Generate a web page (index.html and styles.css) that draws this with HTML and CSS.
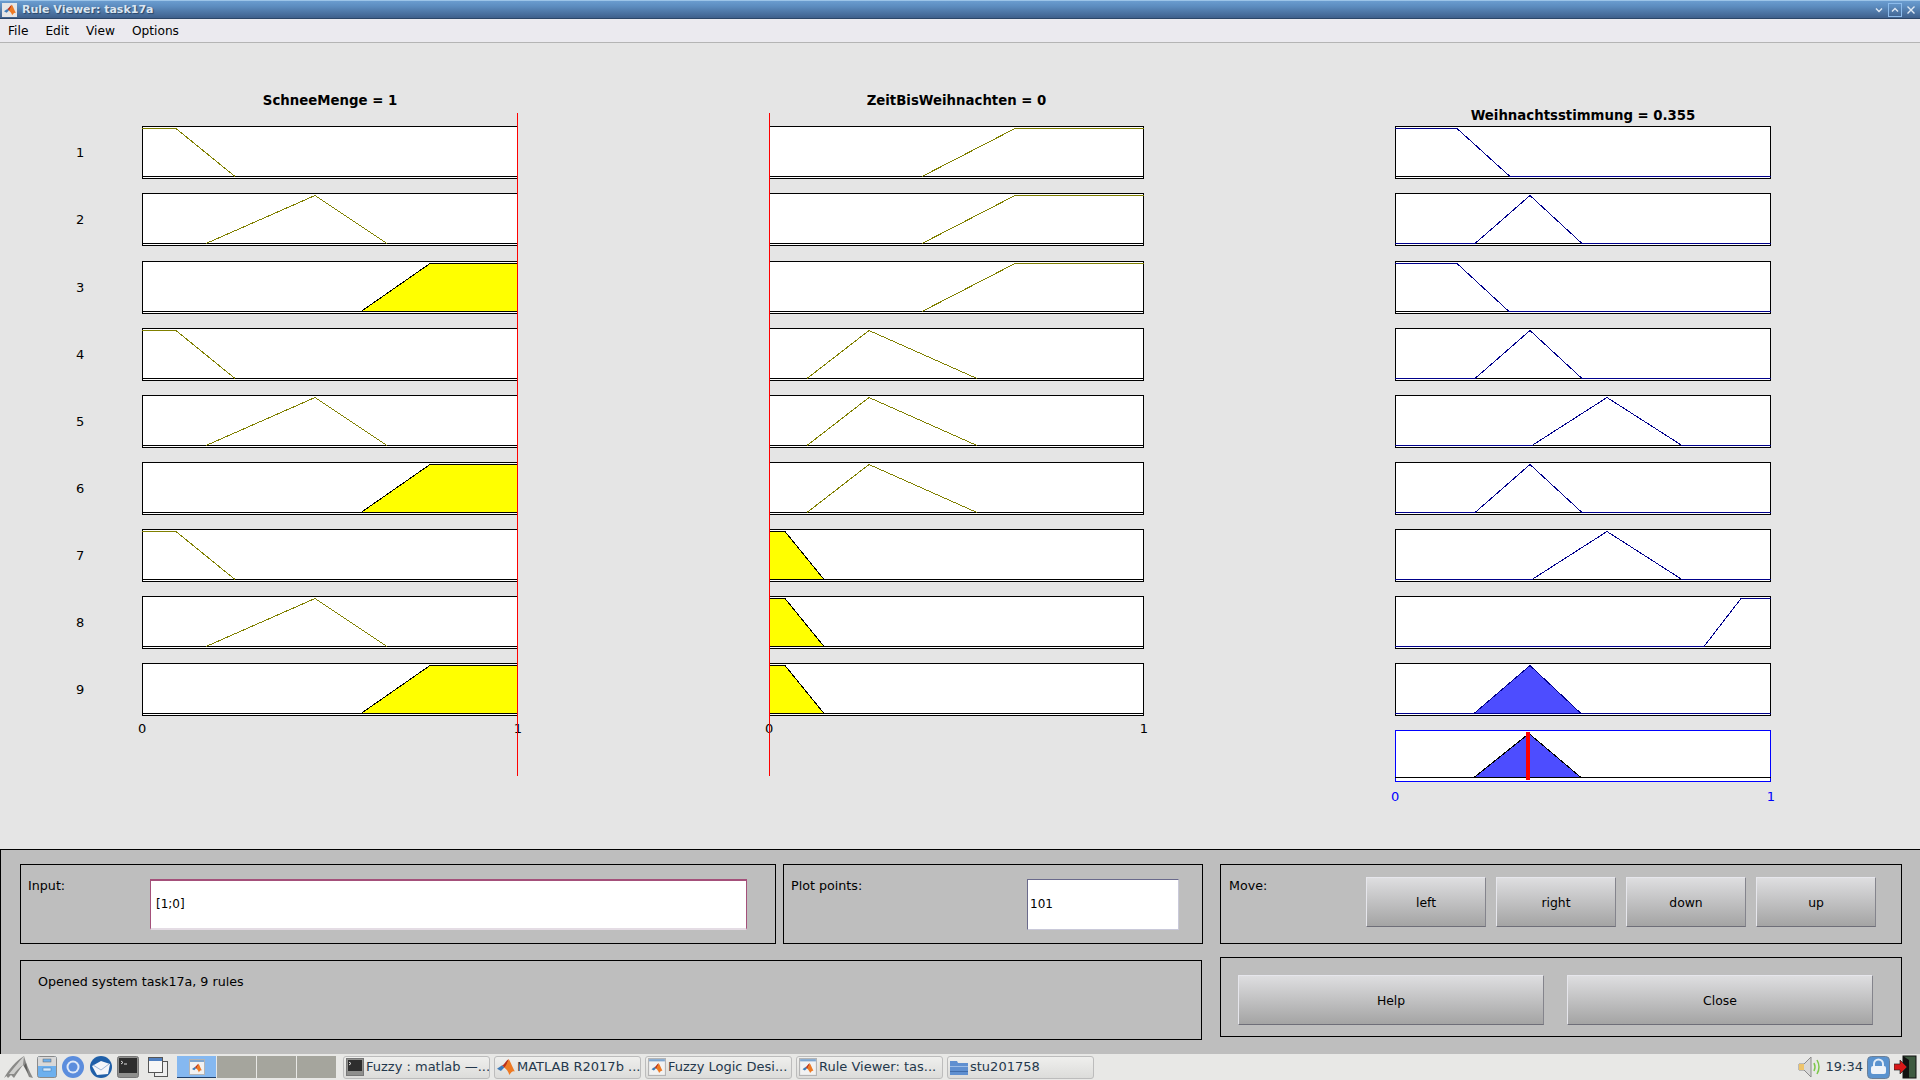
FILE: index.html
```html
<!DOCTYPE html>
<html>

<head>
    <title>Rule Viewer: task17a</title>
    <link rel="stylesheet" href="styles.css">
</head>

<body>
    <svg class="defs">
        <symbol id="matlab" viewBox="0 0 16 16">
            <path d="M0 9.5 L4.5 6.5 L6.5 8.5 L3.5 11.5Z" fill="#3d7ab8" />
            <path d="M4.5 6.5 C6.5 6 8 2 10.5 1 L8 9 L6.5 8.5Z" fill="#b8301c" />
            <path d="M10.5 1 C12 3 14 9 16 12 C14 11 12.5 12.5 11 15 C10 12 8.5 10 6.5 8.5 C8 7 9.5 3 10.5 1Z" fill="#ee7a24" />
        </symbol>
        <symbol id="matlabwin" viewBox="0 0 16 16">
            <rect x="0.5" y="0.5" width="15" height="15" fill="#f2f2f2" stroke="#b4b4b4" />
            <rect x="1" y="1" width="14" height="2" fill="#7fa6cf" />
            <use href="#matlab" x="3" y="4" width="10" height="10" />
        </symbol>
        <!-- box and baseline of one axes, stretches with the svg it is used in -->
        <symbol id="frame">
            <rect class="box" x="0.5" y="0.5" />
            <line x1="0" y1="50.5" x2="100%" y2="50.5" stroke="#000" />
        </symbol>
    </svg>

    <div class="titlebar">
        <div class="titleicon"><svg width="12" height="12"><use href="#matlab" /></svg></div>
        <span class="titletext">Rule Viewer: task17a</span>
        <div class="winbtns">
            <svg width="12" height="12" viewBox="0 0 12 12"><path d="M3 4.5 L6 7.5 L9 4.5" class="winglyph" /></svg>
            <svg class="winactive" width="12" height="12" viewBox="0 0 12 12"><path d="M3 7.5 L6 4.5 L9 7.5" class="winglyph" /></svg>
            <svg width="12" height="12" viewBox="0 0 12 12"><path d="M2.5 2.5 L9.5 9.5 M9.5 2.5 L2.5 9.5" class="winglyph" /></svg>
        </div>
    </div>

    <div class="menubar">
        <span>File</span>
        <span>Edit</span>
        <span>View</span>
        <span>Options</span>
    </div>

    <div class="plots">
        <div class="rulenums">
            <div>1</div><div>2</div><div>3</div><div>4</div><div>5</div><div>6</div><div>7</div><div>8</div><div>9</div>
        </div>

        <div class="col col1">
            <div class="plottitle">SchneeMenge = 1</div>
            <svg class="axes"><use href="#frame" /><polyline class="olive" points="0,2.5 34,2.5 93,50.5" /></svg>
            <svg class="axes"><use href="#frame" /><polyline class="olive" points="64,50.5 173,2.5 245,50.5" /></svg>
            <svg class="axes"><use href="#frame" /><polygon class="yellow" points="219,50.5 288,2.5 376,2.5 376,50.5" /></svg>
            <svg class="axes"><use href="#frame" /><polyline class="olive" points="0,2.5 34,2.5 93,50.5" /></svg>
            <svg class="axes"><use href="#frame" /><polyline class="olive" points="64,50.5 173,2.5 245,50.5" /></svg>
            <svg class="axes"><use href="#frame" /><polygon class="yellow" points="219,50.5 288,2.5 376,2.5 376,50.5" /></svg>
            <svg class="axes"><use href="#frame" /><polyline class="olive" points="0,2.5 34,2.5 93,50.5" /></svg>
            <svg class="axes"><use href="#frame" /><polyline class="olive" points="64,50.5 173,2.5 245,50.5" /></svg>
            <svg class="axes"><use href="#frame" /><polygon class="yellow" points="219,50.5 288,2.5 376,2.5 376,50.5" /></svg>
            <div class="ticks"><span>0</span><span>1</span></div>
            <div class="cursor cursor-right"></div>
        </div>

        <div class="col col2">
            <div class="plottitle">ZeitBisWeihnachten = 0</div>
            <svg class="axes"><use href="#frame" /><polyline class="olive" points="153,50.5 246,2.5 375,2.5" /></svg>
            <svg class="axes"><use href="#frame" /><polyline class="olive" points="153,50.5 246,2.5 375,2.5" /></svg>
            <svg class="axes"><use href="#frame" /><polyline class="olive" points="153,50.5 246,2.5 375,2.5" /></svg>
            <svg class="axes"><use href="#frame" /><polyline class="olive" points="38,50.5 100,2.5 208,50.5" /></svg>
            <svg class="axes"><use href="#frame" /><polyline class="olive" points="38,50.5 100,2.5 208,50.5" /></svg>
            <svg class="axes"><use href="#frame" /><polyline class="olive" points="38,50.5 100,2.5 208,50.5" /></svg>
            <svg class="axes"><use href="#frame" /><polygon class="yellow" points="0,2.5 16,2.5 55,50.5 0,50.5" /></svg>
            <svg class="axes"><use href="#frame" /><polygon class="yellow" points="0,2.5 16,2.5 55,50.5 0,50.5" /></svg>
            <svg class="axes"><use href="#frame" /><polygon class="yellow" points="0,2.5 16,2.5 55,50.5 0,50.5" /></svg>
            <div class="ticks"><span>0</span><span>1</span></div>
            <div class="cursor cursor-left"></div>
        </div>

        <div class="col col3">
            <div class="plottitle outtitle">Weihnachtsstimmung = 0.355</div>
            <svg class="axes"><use href="#frame" /><polyline class="navy" points="0,2.5 62,2.5 115,50.5 376,50.5" /></svg>
            <svg class="axes"><use href="#frame" /><polyline class="navy" points="0,50.5 80,50.5 135,2.5 187,50.5 376,50.5" /></svg>
            <svg class="axes"><use href="#frame" /><polyline class="navy" points="0,2.5 62,2.5 114,50.5 376,50.5" /></svg>
            <svg class="axes"><use href="#frame" /><polyline class="navy" points="0,50.5 80,50.5 135,2.5 187,50.5 376,50.5" /></svg>
            <svg class="axes"><use href="#frame" /><polyline class="navy" points="0,50.5 137,50.5 212,2.5 287,50.5 376,50.5" /></svg>
            <svg class="axes"><use href="#frame" /><polyline class="navy" points="0,50.5 80,50.5 135,2.5 187,50.5 376,50.5" /></svg>
            <svg class="axes"><use href="#frame" /><polyline class="navy" points="0,50.5 137,50.5 212,2.5 287,50.5 376,50.5" /></svg>
            <svg class="axes"><use href="#frame" /><polyline class="navy" points="0,50.5 309,50.5 346,2.5 376,2.5" /></svg>
            <svg class="axes"><use href="#frame" /><polygon class="bluefill" points="0,50.5 79,50.5 135,2.5 186,50.5 376,50.5" /></svg>
            <svg class="axes">
                <rect class="aggbox" x="0.5" y="0.5" />
                <polygon class="aggregate" points="0,47.5 79,47.5 134,3.5 186,47.5 376,47.5" />
                <rect x="131" y="2" width="4" height="48" fill="#f00" />
            </svg>
            <div class="ticks blueticks"><span>0</span><span>1</span></div>
        </div>
    </div>

    <div class="controls">
        <div class="ctlleft">
            <div class="ctlrow">
                <div class="panel inputpanel">
                    <div class="label inputlabel">Input:</div>
                    <div class="edit inputedit">[1;0]</div>
                </div>
                <div class="panel plotpanel">
                    <div class="label plotlabel">Plot points:</div>
                    <div class="edit plotedit">101</div>
                </div>
            </div>
            <div class="panel statuspanel">Opened system task17a, 9 rules</div>
        </div>
        <div class="ctlright">
            <div class="panel movepanel">
                <div class="label movelabel">Move:</div>
                <button class="btn movebtn">left</button>
                <button class="btn movebtn">right</button>
                <button class="btn movebtn">down</button>
                <button class="btn movebtn">up</button>
            </div>
            <div class="panel helppanel">
                <button class="btn bigbtn">Help</button>
                <button class="btn bigbtn">Close</button>
            </div>
        </div>
    </div>

    <div class="taskbar">
        <div class="launchers">
            <svg width="30" height="24" viewBox="0 0 30 24">
                <path d="M1 23 C6 14 13 6 21 1 C23 8 26 16 30 23 L26 22 C24 17 22 13 20 10 C17 14 14 18 11 23 L8 20 L5 23 L3.5 21Z" fill="#8a8a88" />
                <path d="M6 19 C10 14 15 8 21 1 L20 10 C16 13 13 16 11 19Z" fill="#cfcfcd" />
                <path d="M23 8 L25 18 L27 22 L21 11Z" fill="#5e5e5c" />
            </svg>
            <svg width="20" height="24" viewBox="0 0 20 24">
                <rect x="0.5" y="1.5" width="19" height="21" rx="2" fill="#6db0ee" stroke="#8a8a8a" />
                <rect x="1" y="2" width="18" height="9" fill="#d9d9d9" />
                <rect x="6" y="4" width="8" height="3" fill="#6db0ee" stroke="#666" stroke-width="0.5" />
                <rect x="6" y="13" width="8" height="3" fill="#d5e9fb" stroke="#3d76b0" stroke-width="0.5" />
            </svg>
            <svg width="24" height="24" viewBox="0 0 24 24">
                <circle cx="12" cy="12" r="11" fill="#5b8ddd" />
                <circle cx="12" cy="12" r="6.5" fill="#dfe9f8" />
                <circle cx="12" cy="12" r="4.5" fill="#5b8ddd" />
            </svg>
            <svg width="24" height="24" viewBox="0 0 24 24">
                <circle cx="12" cy="12" r="11" fill="#1f5fa8" />
                <path d="M3 11 L12 6 L21 9 L19 19 L8 20Z" fill="#f4f6fa" />
                <path d="M4 10 L12 15 L20 9" fill="none" stroke="#9db5d6" />
            </svg>
            <svg width="22" height="22" viewBox="0 0 22 22">
                <rect x="0.5" y="0.5" width="21" height="21" rx="2" fill="#8f8f8d" stroke="#777" />
                <rect x="2" y="2" width="18" height="15" fill="#2e2e2e" />
                <path d="M4 5 L6 6.5 L4 8 M7 8 H10" fill="none" stroke="#ddd" />
            </svg>
            <svg class="switcher" width="20" height="20" viewBox="0 0 20 20">
                <rect x="6.5" y="4.5" width="13" height="15" fill="#eee" stroke="#555" />
                <rect x="0.5" y="0.5" width="14" height="15" fill="#f6f6f6" stroke="#555" />
                <rect x="1" y="1" width="13" height="3" fill="#4f7fc0" />
            </svg>
        </div>
        <div class="pager">
            <div class="desk deskactive"><svg width="16" height="16"><use href="#matlabwin" /></svg></div>
            <div class="desk"></div>
            <div class="desk"></div>
            <div class="desk"></div>
        </div>
        <div class="tasks">
            <div class="task">
                <svg width="18" height="18" viewBox="0 0 18 18"><rect x="0.5" y="0.5" width="17" height="17" fill="#8f8f8d" stroke="#777" /><rect x="2" y="2" width="14" height="11" fill="#2e2e2e" /><path d="M3 4 L5 5.5 L3 7" fill="none" stroke="#ddd" /></svg>
                <span>Fuzzy : matlab —...</span>
            </div>
            <div class="task">
                <svg width="18" height="18"><use href="#matlab" /></svg>
                <span>MATLAB R2017b ...</span>
            </div>
            <div class="task">
                <svg width="18" height="18"><use href="#matlabwin" /></svg>
                <span>Fuzzy Logic Desi...</span>
            </div>
            <div class="task">
                <svg width="18" height="18"><use href="#matlabwin" /></svg>
                <span>Rule Viewer: tas...</span>
            </div>
            <div class="task">
                <svg width="18" height="18" viewBox="0 0 18 18"><path d="M0 3 H7 L8 5 H18 V17 H0Z" fill="#5f8fd0" /><rect x="0" y="8" width="18" height="1" fill="#9dbde6" /><rect x="0" y="13" width="18" height="1" fill="#3f6cab" /></svg>
                <span>stu201758</span>
            </div>
        </div>
        <div class="tray">
            <svg width="24" height="24" viewBox="0 0 24 24">
                <path d="M1 9 H6 L13 2 V22 L6 15 H1Z" fill="#d8d8d8" stroke="#8a8a8a" />
                <rect x="1" y="9" width="5" height="6" fill="#eec46a" />
                <path d="M16 8 Q18 12 16 16 M19 5 Q23 12 19 19" fill="none" stroke="#7cc84a" stroke-width="1.5" />
            </svg>
            <span class="clock">19:34</span>
            <svg width="23" height="23" viewBox="0 0 23 23">
                <rect x="0.5" y="0.5" width="22" height="22" rx="4" fill="#5a93cf" stroke="#6b7f96" />
                <path d="M7 10 V8 A4.5 4.5 0 0 1 16 8 V10" fill="none" stroke="#e4edf7" stroke-width="2" />
                <rect x="4" y="10" width="15" height="8" rx="2" fill="#eef3f9" />
            </svg>
            <svg width="23" height="24" viewBox="0 0 23 24">
                <rect x="9" y="1" width="13" height="22" fill="#3d5a40" stroke="#111" />
                <path d="M9 1 L15 5 V23 H9Z" fill="#111" />
                <path d="M0 9 H6 V5 L13 12 L6 19 V15 H0Z" fill="#d81818" stroke="#222" stroke-width="0.7" />
            </svg>
        </div>
    </div>
</body>

</html>
```

FILE: styles.css
```css
* {
    box-sizing: border-box;
}

body {
    margin: 0;
    width: 1920px;
    height: 1080px;
    overflow: hidden;
    display: flex;
    flex-direction: column;
    background: #e5e5e5;
    font-family: "DejaVu Sans", sans-serif;
    font-size: 12.7px;
    color: #000;
}

.defs {
    display: none;
}

/* window title */
.titlebar {
    height: 19px;
    display: flex;
    align-items: center;
    padding-left: 2px;
    background: linear-gradient(#6a9ccf, #5d8dc0 30%, #3f608c);
    border-top: 1px solid #9cc4e8;
    border-bottom: 1px solid #2c4668;
}

.titleicon {
    width: 15px;
    height: 14px;
    background: #e6e6e6;
    display: flex;
    align-items: center;
    justify-content: center;
}

.titletext {
    margin-left: 5px;
    font-size: 11px;
    font-weight: bold;
    color: #dbe6f1;
    text-shadow: 1px 1px 1px #2c4668;
}

.winbtns {
    margin-left: auto;
    display: flex;
    gap: 4px;
    padding-right: 3px;
}

.winglyph {
    fill: none;
    stroke: #dfe9f4;
    stroke-width: 1.4;
}

.winactive {
    outline: 1px solid #8dbcec;
}

/* menu */
.menubar {
    height: 24px;
    display: flex;
    align-items: center;
    padding-left: 8px;
    gap: 17px;
    font-size: 12.2px;
    background: #ebeaef;
    border-bottom: 1px solid #b4b4b4;
}

/* plots */
.plots {
    flex: 1;
    display: flex;
}

.rulenums {
    width: 142px;
    padding: 83.3px 0 0 76px;
    font-size: 13px;
}

.rulenums div {
    height: 67.125px;
    line-height: 53px;
}

.col {
    position: relative;
    width: 376px;
    padding-top: 50px;
}

.col2 {
    width: 375px;
    margin-left: 251px;
}

.col3 {
    margin-left: 251px;
}

.plottitle {
    height: 33.3px;
    line-height: 16px;
    text-align: center;
    font-size: 13.3px;
    font-weight: bold;
}

.outtitle {
    padding-top: 15px;
}

.axes {
    display: block;
    width: 100%;
    height: 53px;
    margin-bottom: 14.125px;
    shape-rendering: crispEdges;
}

.box {
    width: calc(100% - 1px);
    height: 52px;
    fill: #fff;
    stroke: #000;
}

.aggbox {
    width: calc(100% - 1px);
    height: 51px;
    fill: #fff;
    stroke: #00f;
}

.olive {
    fill: none;
    stroke: #808000;
}

.navy {
    fill: none;
    stroke: #00008b;
}

.yellow {
    fill: #ff0;
    stroke: #000;
}

.bluefill {
    fill: #4d4dff;
    stroke: #00008b;
}

.aggregate {
    fill: #4d4dff;
    stroke: #000;
}

.ticks {
    display: flex;
    justify-content: space-between;
    margin: -9px -4px 0;
    font-size: 13px;
    line-height: 16px;
}

.blueticks {
    margin-top: -9px;
    color: #00f;
}

/* the red input cursor lies over the axes */
.cursor {
    position: absolute;
    top: 70px;
    width: 1px;
    height: 663px;
    background: #f00;
}

.cursor-right {
    right: 0;
}

.cursor-left {
    left: 0;
}

/* control area */
.controls {
    height: 205px;
    display: flex;
    padding: 14px 0 0 19px;
    background: #bebebe;
    border-top: 1px solid #000;
    border-left: 1px solid #000;
}

.panel {
    border: 1px solid #000;
    height: 80px;
    display: flex;
}

.ctlleft {
    width: 1184px;
}

.ctlrow {
    display: flex;
    gap: 7px;
    margin-bottom: 16px;
}

.inputpanel {
    width: 756px;
    padding: 14px 0 0 7px;
}

.plotpanel {
    width: 420px;
    padding: 14px 0 0 7px;
}

.statuspanel {
    width: 1182px;
    padding: 13px 0 0 17px;
}

.label {
    height: 15px;
    line-height: 15px;
    margin-top: -1px;
}

.inputlabel {
    width: 122px;
}

.plotlabel {
    width: 236px;
}

.movelabel {
    width: 137px;
    margin-top: 1px;
}

.edit {
    height: 51px;
    line-height: 47px;
    background: #fff;
    border: 1px solid;
    font-size: 12px;
}

.inputedit {
    width: 597px;
    border-color: #a4507a #a4507a #e4dce4 #a4507a;
    border-width: 2px 1px;
    padding-left: 5px;
}

.plotedit {
    width: 152px;
    line-height: 49px;
    padding-left: 2px;
    border-color: #6a6a8c #c9c9d9 #c9c9d9 #6a6a8c;
}

.ctlright {
    width: 682px;
    margin-left: 16px;
}

.movepanel {
    padding: 12px 0 0 8px;
    margin-bottom: 13px;
}

.btn {
    font-family: "DejaVu Sans", sans-serif;
    font-size: 12.4px;
    color: #000;
    padding: 1px 0 0;
    height: 50px;
    background: linear-gradient(#dedee0, #a4a4a4);
    border-style: solid;
    border-width: 1px;
    border-color: #e6e6ec #84848c #6e6e78 #e6e6ec;
}

.movebtn {
    width: 120px;
    margin-right: 10px;
}

.helppanel {
    padding: 17px 0 0 17px;
    gap: 23px;
}

.bigbtn {
    width: 306px;
}

/* desktop panel */
.taskbar {
    height: 26px;
    display: flex;
    align-items: center;
    background: #e8e8e6;
}

.launchers {
    display: flex;
    align-items: center;
    gap: 4px;
    width: 177px;
    padding-left: 3px;
}

.switcher {
    margin-left: 5px;
}

.pager {
    display: flex;
    gap: 1px;
    width: 166px;
}

.desk {
    width: 39px;
    height: 22px;
    background: #a5a59d;
    display: flex;
    align-items: center;
    justify-content: center;
}

.deskactive {
    background: #85b8f0;
    border-bottom: 1px solid #1f3f6a;
}

.tasks {
    display: flex;
    gap: 4px;
}

.task {
    width: 147px;
    height: 23px;
    display: flex;
    align-items: center;
    gap: 2px;
    padding-left: 2px;
    border: 1px solid #bcbcbc;
    border-radius: 3px;
    background: linear-gradient(#efefed, #dcdcda);
    font-size: 13px;
    white-space: nowrap;
    overflow: hidden;
}

.task svg {
    flex-shrink: 0;
}

.task span {
    padding-bottom: 2px;
    color: #24384c;
}

.tray {
    margin-left: auto;
    display: flex;
    align-items: center;
    gap: 4px;
    padding-right: 3px;
}

.clock {
    font-size: 13px;
    padding-bottom: 2px;
    color: #24384c;
}
```
